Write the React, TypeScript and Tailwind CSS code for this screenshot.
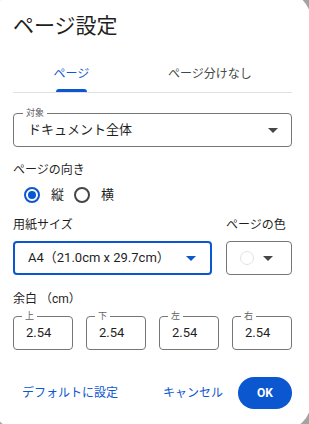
import { useState } from "react";

const font = { fontFamily: "Roboto, 'Noto Sans CJK JP', sans-serif" };

function Caret({ className = "" }: { className?: string }) {
  return (
    <svg width="10" height="5" viewBox="0 0 10 5" className={className}>
      <path d="M0 0h10L5 5z" fill="currentColor" />
    </svg>
  );
}

function Radio({ checked, label }: { checked: boolean; label: string }) {
  return (
    <label className="flex items-center">
      <span className="w-9 h-9 flex items-center justify-center">
        <span
          className={
            "w-4 h-4 rounded-full border-2 flex items-center justify-center " +
            (checked ? "border-[#0b57d0]" : "border-[#444746]")
          }
        >
          {checked && <span className="w-2 h-2 rounded-full bg-[#0b57d0]" />}
        </span>
      </span>
      <span className="text-[13px] text-[#1f1f1f] ml-[1px]">{label}</span>
    </label>
  );
}

function MarginBox({ label, value }: { label: string; value: string }) {
  return (
    <div className="relative shrink-0 w-[60px] h-[34px] rounded-[4px] border border-[#747775]">
      <span className="absolute -top-[7px] left-[8px] px-[3px] bg-white text-[9px] leading-[12px] text-[#5f6368]">
        {label}
      </span>
      <div className="pl-[12px] pt-[8px] text-[13px] leading-[16px] text-[#1f1f1f]">{value}</div>
    </div>
  );
}

export default function App() {
  const [tab, setTab] = useState(0);
  return (
    <div className="relative w-[309px] h-[424px] overflow-hidden bg-[#a3a3a3]" style={font}>
      <div className="absolute -left-[8px] -top-[8px] w-[319px] h-[438px] rounded-[28px] bg-white">
        <div className="pl-[21px] pr-[19px] pt-[20px]">
          <h1 className="text-[21px] leading-[28px] text-[#1f1f1f]">ページ設定</h1>

          <div className="mt-[16px] flex border-b border-[#e0e0e0]">
            <button
              onClick={() => setTab(0)}
              className="w-[117px] h-[36px] relative flex items-center justify-center text-[12px] text-[#0b57d0]"
            >
              ページ
              {tab === 0 && (
                <span className="absolute bottom-0 left-[43px] w-[31px] h-[3px] rounded-t-[3px] bg-[#0b57d0]" />
              )}
            </button>
            <button
              onClick={() => setTab(1)}
              className="w-[160px] h-[36px] flex items-center justify-center text-[12px] text-[#444746]"
            >
              ページ分けなし
            </button>
          </div>

          <div className="relative mt-[20px] h-[34px] rounded-[4px] border border-[#747775] flex items-center justify-between pl-[14px] pr-[13px]">
            <span className="absolute -top-[7px] left-[9px] px-[3px] bg-white text-[9px] leading-[12px] text-[#5f6368]">
              対象
            </span>
            <span className="text-[13px] text-[#1f1f1f]">ドキュメント全体</span>
            <Caret className="text-[#444746]" />
          </div>

          <div className="mt-[15px] text-[12px] leading-[16px] text-[#1f1f1f]">ページの向き</div>
          <div className="flex items-center -mt-[1px] ml-[1px]">
            <Radio checked label="縦" />
            <Radio checked={false} label="横" />
          </div>

          <div className="mt-[4px] flex gap-[14px]">
            <div className="w-[199px] shrink-0">
              <div className="text-[12px] leading-[16px] text-[#1f1f1f]">用紙サイズ</div>
              <div className="mt-[8px] h-[34px] rounded-[4px] border-2 border-[#0b57d0] flex items-center justify-between pl-[13px] pr-[14px]">
                <span className="text-[13px] text-[#1f1f1f] whitespace-nowrap">A4（21.0cm x 29.7cm）</span>
                <Caret className="text-[#0b57d0]" />
              </div>
            </div>
            <div className="w-[66px] shrink-0">
              <div className="text-[12px] leading-[16px] text-[#1f1f1f] whitespace-nowrap">ページの色</div>
              <div className="mt-[8px] h-[34px] rounded-[4px] border border-[#747775] flex items-center pl-[13px] gap-[9px]">
                <span className="w-[14px] h-[14px] rounded-full border border-[#e3e3e3] bg-white" />
                <Caret className="text-[#444746]" />
              </div>
            </div>
          </div>

          <div className="mt-[16px] text-[12px] leading-[16px] text-[#1f1f1f]">余白 （cm）</div>
          <div className="mt-[9px] flex gap-[13px]">
            <MarginBox label="上" value="2.54" />
            <MarginBox label="下" value="2.54" />
            <MarginBox label="左" value="2.54" />
            <MarginBox label="右" value="2.54" />
          </div>

          <div className="mt-[27px] flex items-center whitespace-nowrap">
            <button className="ml-[9px] text-[12px] text-[#0b57d0]">デフォルトに設定</button>
            <button className="ml-auto text-[12px] text-[#0b57d0]">キャンセル</button>
            <button className="ml-[15px] w-[54px] h-[32px] rounded-full bg-[#0b57d0] text-white text-[12px] font-bold">
              OK
            </button>
          </div>
        </div>
      </div>
    </div>
  );
}
